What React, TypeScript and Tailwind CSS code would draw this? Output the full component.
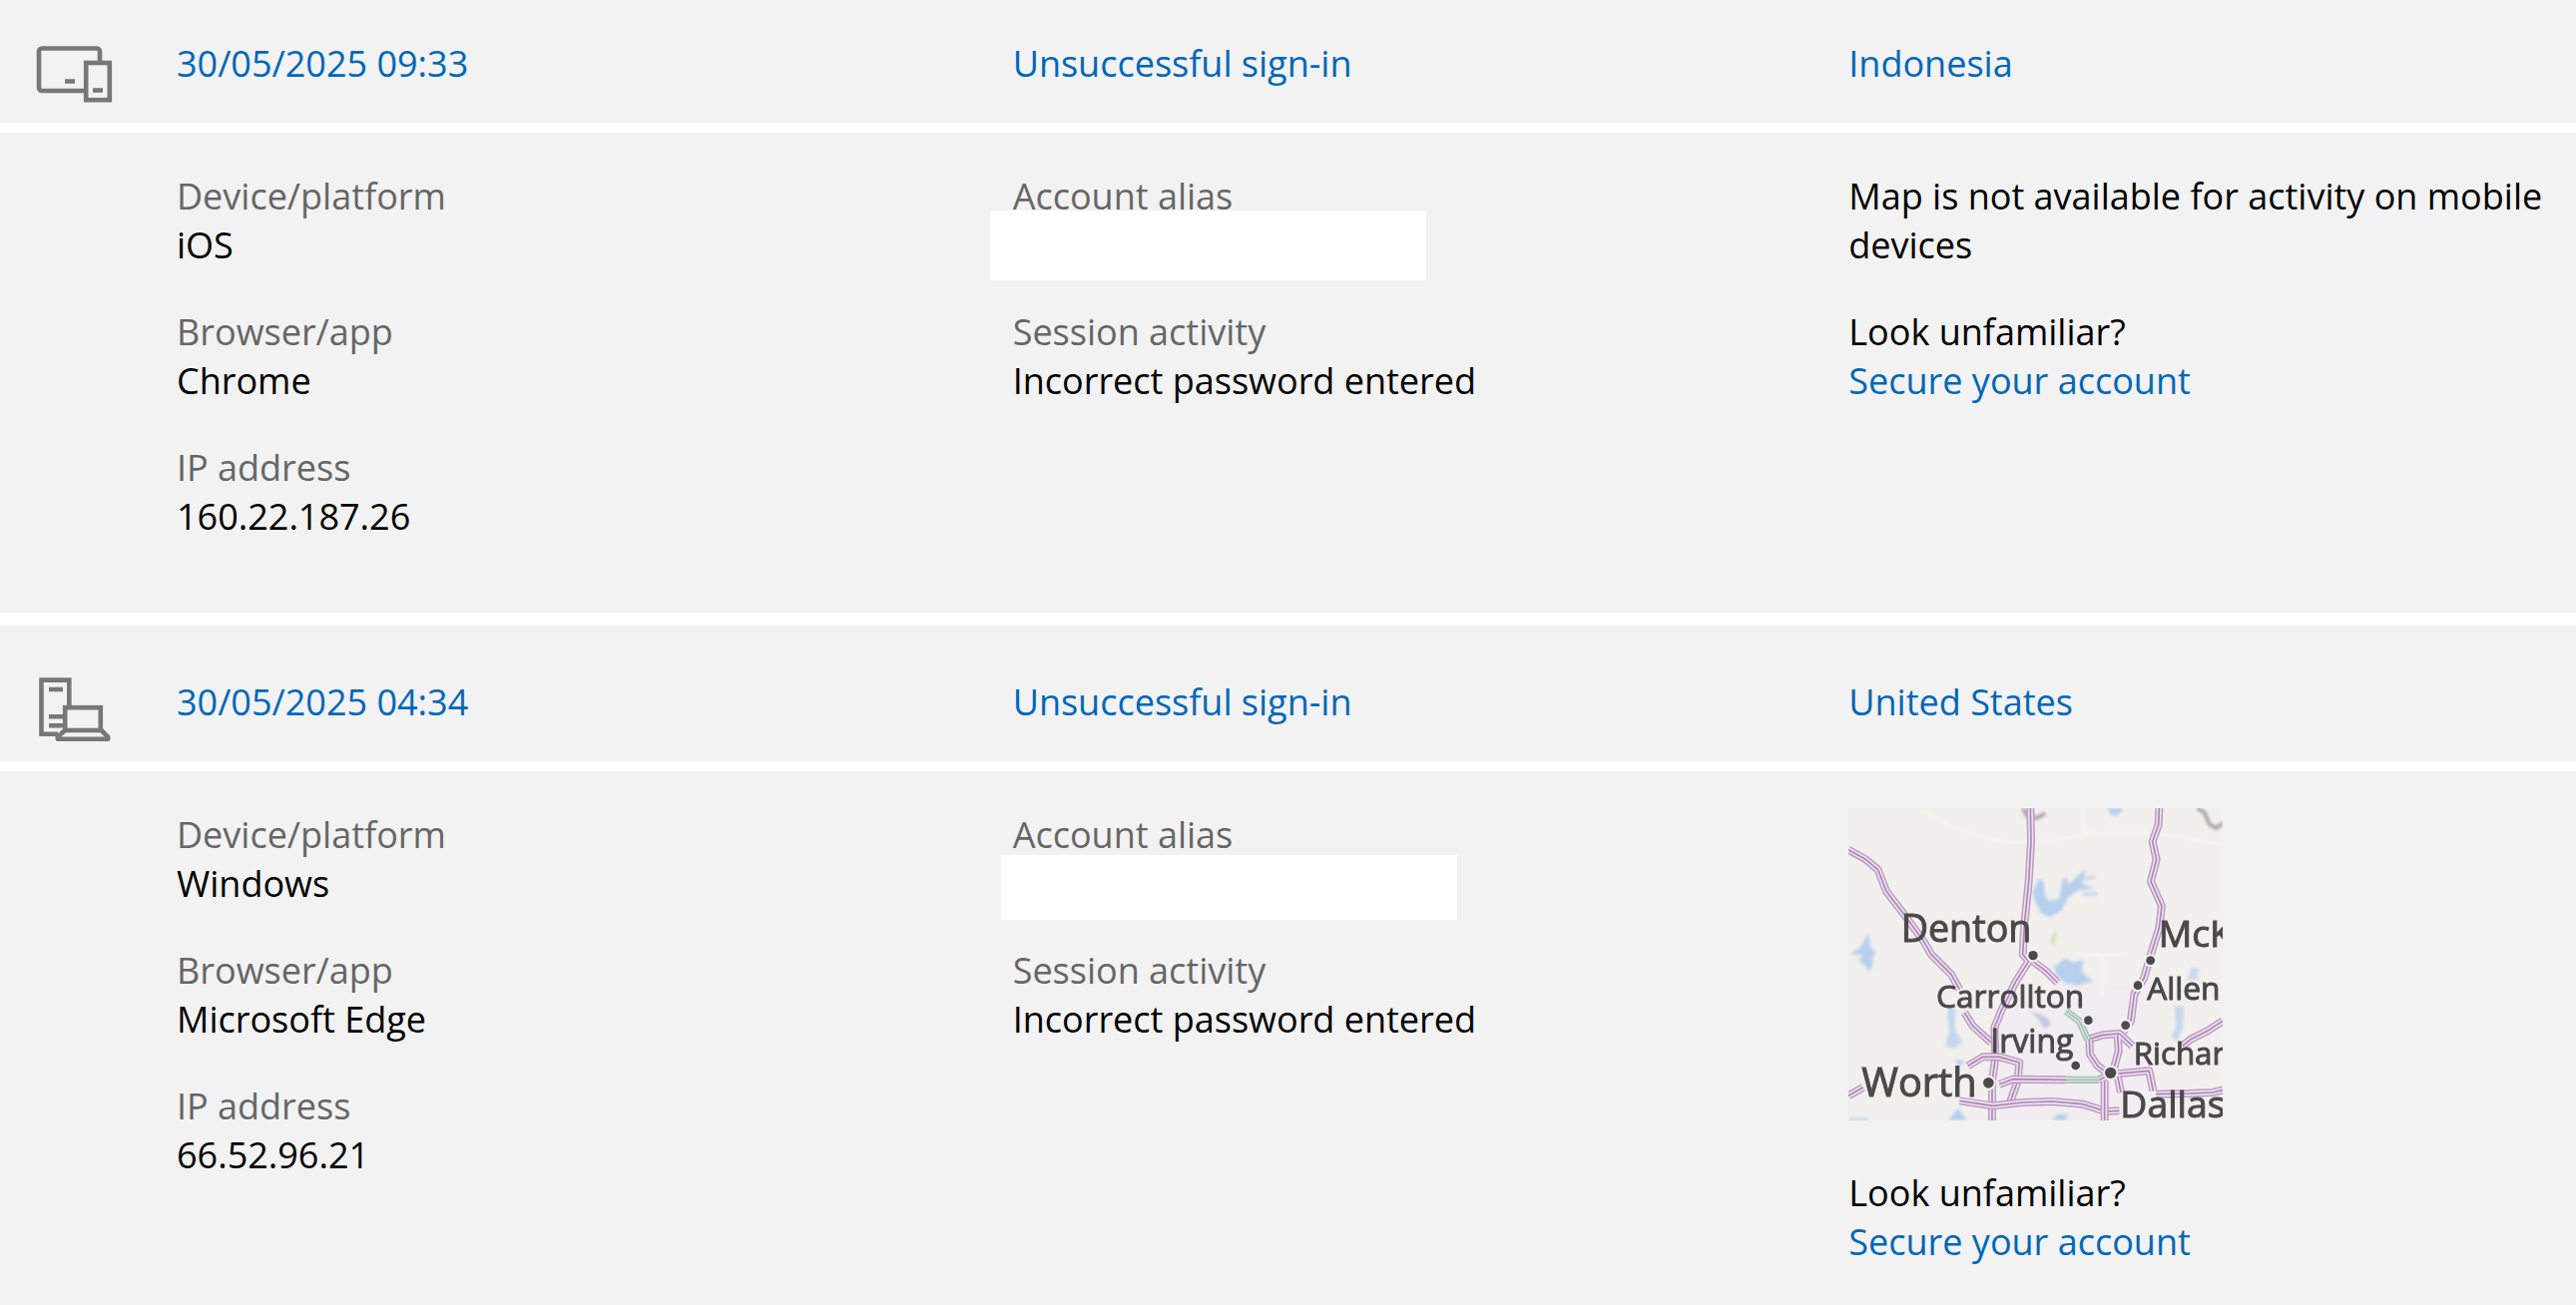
import { useState, type ReactNode } from "react";

const rowGrid = "grid grid-cols-[177px_838fr_838fr_729fr] w-full text-left";

function MobileDevicesIcon() {
  return (
    <svg viewBox="0 0 80 72" className="ml-9 h-[72px] w-20" fill="none" stroke="#777" strokeWidth="4.6" aria-hidden="true">
      <path d="M64 26V16.5a3 3 0 0 0-3-3H6a3 3 0 0 0-3 3V53a3 3 0 0 0 3 3h44" />
      <rect x="50.2" y="28" width="23.6" height="37.2" />
      <path d="M29 46.5h10M57 55.5h10" />
    </svg>
  );
}

function DesktopDevicesIcon() {
  return (
    <svg viewBox="0 0 80 72" className="ml-9 h-[72px] w-20" fill="none" stroke="#777" strokeWidth="4.6" aria-hidden="true">
      <path d="M33.3 34V6.6H5.5v54.2H22" />
      <path d="M13 16h14M13 43.3h14M13 52.3h14" />
      <rect x="29.2" y="34.2" width="35.6" height="22.8" />
      <path d="M29 57l-7.2 6.6v2.2h50.4v-2.2L65.6 57" strokeLinejoin="round" />
    </svg>
  );
}

const roads = [
  "M36 155L85 182L125 215L150 280L200 345L262 430L285 470L345 530L370 575",
  "M385 645L410 685L465 735",
  "M583 30L585 130L578 250L565 380L560 470L578 490L540 550L495 640L475 690L478 780L468 850L468 969",
  "M590 490L630 520L665 555",
  "M970 30L968 80L950 130L962 185L945 250L978 325L970 390L945 470L925 540L895 590L885 670L860 705",
  "M760 725L800 712L850 708L890 745M845 712L848 760L835 810",
  "M760 725L762 770L785 805L820 830",
  "M395 805L440 778L490 778L550 795L545 850L520 920",
  "M490 860L530 845L690 847M790 847L825 830L940 820L952 880",
  "M36 895L80 870M370 910L470 925L560 915L650 912L740 920L810 942L850 940",
  "M806 850L806 969",
  "M845 835L855 885M960 890L1060 888L1130 885L1161 878",
  "M1040 745L1065 725L1115 700L1161 670",
];

const cities = [
  { name: "Denton", x: 194, y: 433, size: 113, dot: [591, 473, 14] },
  { name: "McK", x: 968, y: 448, size: 112, dot: [944, 488, 13] },
  { name: "Carrollton", x: 300, y: 630, size: 95, dot: [757, 668, 13] },
  { name: "Allen", x: 934, y: 607, size: 95, dot: [906, 563, 13] },
  { name: "Irving", x: 463, y: 765, size: 96, dot: [719, 804, 13] },
  { name: "Richar", x: 893, y: 802, size: 94, dot: [869, 683, 13] },
  { name: "Worth", x: 76, y: 898, size: 119, dot: [457, 856, 16] },
  { name: "Dallas", x: 853, y: 960, size: 112, dot: [824, 826, 17] },
];

function LocationMap() {
  return (
    <svg
      viewBox="36 30 1125 939"
      className="block h-[313px] w-[375px]"
      role="img"
      aria-label="Map of the Dallas area"
      fontFamily="'Open Sans', 'Noto Sans', sans-serif"
    >
      <defs>
        <filter id="soft" x="-5%" y="-5%" width="110%" height="110%">
          <feGaussianBlur stdDeviation="2" />
        </filter>
        <filter id="water" x="-5%" y="-5%" width="110%" height="110%">
          <feGaussianBlur stdDeviation="5" />
        </filter>
        <filter id="label" x="-5%" y="-5%" width="110%" height="110%">
          <feGaussianBlur stdDeviation="2" />
        </filter>
      </defs>
      <rect x="36" y="30" width="1125" height="939" fill="#f2f0ed" />
      <g filter="url(#water)">
        <path d="M690 560h250v409H500l-60-160 60-170z" fill="#f1ebf2" opacity="0.7" />
        <path d="M250 30Q330 90 450 120T760 108L940 102L1161 140M740 30L745 120M735 470H860M800 470V600" fill="none" stroke="#f8f5ee" strokeWidth="7" />
        <g fill="#b6cfee">
          <path d="M590 280l20-38 14 12 2 40 10 14 32-4 14-68 14 28 26-30 28-20-12 44 40 14-50 4-34 24-16 36-38 22-26-14-18-36z" />
          <path d="M735 245l42-10M740 288h44M690 240l6 24" stroke="#c5cfe8" strokeWidth="8" />
          <path d="M40 468l30-18 12-20 14-24 6 40 16 16-10 22 2 14-14 26-8-20-22-14 16-18z" />
          <path d="M655 505l34-24 22 14 30-10-4 38 34 28-46 12-36-6-30-28z" />
          <path d="M333 625h22l2 75 22 34-24 18-30-6 14-40z" opacity="0.8" />
          <path d="M580 640l54 18 12 26-24 8-14-28z" fill="#c3c9e8" />
          <path d="M1055 545l12-36 28 6-14 14 12 16zM1015 625h30l-4 70-18 40-16-20 14-30z" opacity="0.7" />
          <path d="M815 30h48l-18 22-20-2zM335 969l30-36 28 36zM36 962h60v7H36zM650 969l12-20 34 2-8 18zM358 785l30 8-24 14z" />
        </g>
        <path d="M640 430l24-42-8 60z" fill="#d3e4be" />
        <path d="M560 30l14 24 28 6 26-14M1085 30l22 14 14 34 20 12 20-14" fill="none" stroke="#a5a0a7" strokeWidth="11" />
      </g>
      <g filter="url(#soft)" fill="none" strokeLinejoin="round">
        {roads.map((d) => (
          <g key={d}>
            <path d={d} stroke="#bd9cc4" strokeWidth="24" />
            <path d={d} stroke="#efe0f0" strokeWidth="15" />
            <path d={d} stroke="#a988b2" strokeWidth="5" />
          </g>
        ))}
        <path d="M690 640L730 670L755 725M690 847H790" stroke="#a3c4b6" strokeWidth="22" />
        <path d="M690 640L730 670L755 725M690 847H790" stroke="#dbe6e0" strokeWidth="12" />
        <path d="M690 640L730 670L755 725M690 847H790" stroke="#97b8aa" strokeWidth="4" />
      </g>
      <g filter="url(#label)" fill="#4b484b">
        {cities.map(({ name, x, y, size, dot }) => (
          <g key={name}>
            <circle cx={dot[0]} cy={dot[1]} r={dot[2]} stroke="#f4f1f1" strokeWidth="12" paintOrder="stroke" />
            <text x={x} y={y} fontSize={size} stroke="#4b484b" strokeWidth="3">
              {name}
            </text>
          </g>
        ))}
      </g>
    </svg>
  );
}

function Field({ label, children }: { label: string; children: ReactNode }) {
  return (
    <div>
      <dt className="text-[#666]">{label}</dt>
      <dd className="relative min-h-[49px]">{children}</dd>
    </div>
  );
}

type Activity = {
  icon: ReactNode;
  time: string;
  place: string;
  platform: string;
  browser: string;
  ip: string;
  aliasMask: string;
  headerPadding: string;
  map?: ReactNode;
};

const activities: Activity[] = [
  {
    icon: <MobileDevicesIcon />,
    time: "30/05/2025 09:33",
    place: "Indonesia",
    platform: "iOS",
    browser: "Chrome",
    ip: "160.22.187.26",
    aliasMask: "-left-[23px] -top-[10px] h-[70px] w-[437px]",
    headerPadding: "pt-[35px]",
  },
  {
    icon: <DesktopDevicesIcon />,
    time: "30/05/2025 04:34",
    place: "United States",
    platform: "Windows",
    browser: "Microsoft Edge",
    ip: "66.52.96.21",
    aliasMask: "-left-[12px] -top-[4px] h-[65px] w-[457px]",
    headerPadding: "pt-12",
    map: <LocationMap />,
  },
];

function ActivityRow({ activity }: { activity: Activity }) {
  const [open, setOpen] = useState(true);
  return (
    <section className="flex flex-col gap-[10px]">
      <button
        type="button"
        aria-expanded={open}
        onClick={() => setOpen(!open)}
        className={`${rowGrid} ${activity.headerPadding} cursor-pointer bg-[#f2f2f2] pb-4 text-[#0067b8]`}
      >
        {activity.icon}
        <span className="pt-1">{activity.time}</span>
        <span className="pt-1">Unsuccessful sign-in</span>
        <span className="pt-1">{activity.place}</span>
      </button>
      {open && (
        <div className={`${rowGrid} bg-[#f2f2f2] pb-[72px]`}>
          <dl className="col-start-2 flex flex-col gap-[38px] pt-[39px]">
            <Field label="Device/platform">{activity.platform}</Field>
            <Field label="Browser/app">{activity.browser}</Field>
            <Field label="IP address">{activity.ip}</Field>
          </dl>
          <dl className="flex flex-col gap-[38px] pt-[39px]">
            <Field label="Account alias">
              <span className={`absolute bg-white ${activity.aliasMask}`} />
            </Field>
            <Field label="Session activity">Incorrect password entered</Field>
          </dl>
          <div className={activity.map ? "flex flex-col gap-12 pt-[37px]" : "flex flex-col gap-[38px] pt-[39px]"}>
            {activity.map ?? <p>Map is not available for activity on mobile devices</p>}
            <div>
              <p>Look unfamiliar?</p>
              <a href="#secure" className="text-[#0067b8]">
                Secure your account
              </a>
            </div>
          </div>
        </div>
      )}
    </section>
  );
}

export default function App() {
  return (
    <main className="flex h-screen flex-col gap-[13px] overflow-hidden bg-white font-['Open_Sans','Noto_Sans',sans-serif] text-[36px] leading-[49px] text-black [&>section]:shrink-0">
      {activities.map((activity) => (
        <ActivityRow key={activity.time} activity={activity} />
      ))}
    </main>
  );
}
